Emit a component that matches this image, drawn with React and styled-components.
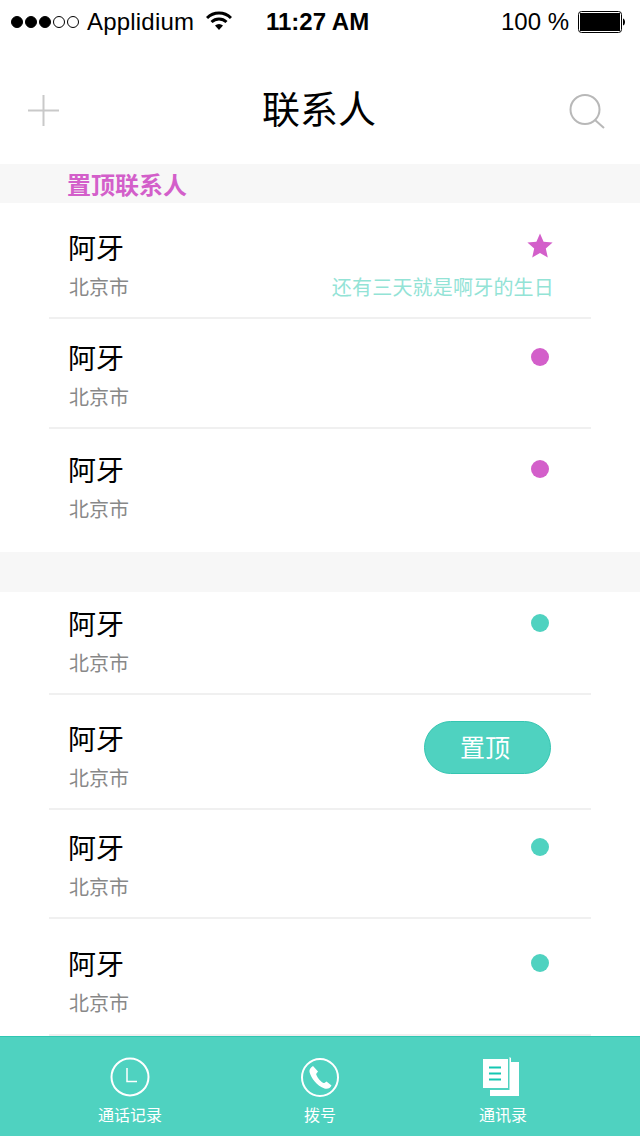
import React from "react";
import styled, { createGlobalStyle } from "styled-components";

const CJK = `"Noto Sans CJK SC", "Liberation Sans", sans-serif`;
const Global = createGlobalStyle`
  html, body { margin: 0; padding: 0; background: #fff; }
  * { box-sizing: border-box; }
`;
const Page = styled.div`
  width: 640px; height: 1136px; display: flex; flex-direction: column;
  background: #fff; overflow: hidden; font-family: ${CJK};
`;
const StatusBar = styled.div`
  height: 44px; flex: none; display: flex; align-items: center;
  font-family: "Liberation Sans", sans-serif; font-size: 24px; color: #000;
`;
const Signal = styled.div`display: flex; gap: 2px; margin-left: 11px; width: 76px;`;
const Dot = styled.span`
  width: 12px; height: 12px; border-radius: 50%;
  border: 1px solid #000; background: ${p => (p.$on ? "#000" : "#fff")};
`;
const Carrier = styled.span`width: 120px; white-space: nowrap; letter-spacing: 0.2px;`;
const Time = styled.span`font-weight: 700; margin-left: 33px; width: 235px; white-space: nowrap;`;
const Percent = styled.span`width: 78px; white-space: nowrap;`;
const Nav = styled.div`
  height: 120px; flex: none; display: flex; align-items: center; justify-content: space-between;
  padding: 12px 35px 0 28px;
`;
const Title = styled.h1`
  margin: 0 0 6px; font-size: 38px; font-weight: 400; color: #000; line-height: 50px;
  padding-left: 10px;
`;
const Band = styled.div`
  height: ${p => p.$h}px; flex: none; background: #f7f7f7; padding-left: 67px;
  font-size: 24px; line-height: 40px; font-weight: 700; color: #d35fca;
`;
const List = styled.div`flex: none; padding: 0 49px;`;
const Row = styled.div`
  height: ${p => p.$h}px; padding: ${p => p.$top}px 38px 0 20px; display: flex;
  justify-content: space-between; align-items: flex-start;
  border-bottom: ${p => (p.$last ? "none" : "2px solid #f0f0f0")};
`;
const Info = styled.div`display: flex; flex-direction: column;`;
const Name = styled.div`font-size: 28px; line-height: 40px; color: #000; margin-left: -1px;`;
const City = styled.div`font-size: 20px; line-height: 40px; color: #888;`;
const Trailing = styled.div`display: flex; flex-direction: column; align-items: flex-end;`;
const MarkerSlot = styled.div`height: 40px; display: flex; align-items: center;`;
const Marker = styled.span`
  width: 18px; height: 18px; border-radius: 50%; margin: 0 4px 0 0;
  background: ${p => p.$color};
`;
const Note = styled.div`
  font-size: 20px; line-height: 40px; color: #93e3d6; letter-spacing: 0.2px; white-space: nowrap;
  margin-right: -1px;
`;
const PinButton = styled.button`
  width: 127px; height: 53px; margin: 3px 2px 0 0; border-radius: 27px;
  border: 1px solid #35c5b1; background: #4fd2c0; color: #fff;
  font-family: ${CJK}; font-size: 25px; line-height: 47px; padding: 0 5px 3px 0;
`;
const TabBar = styled.div`
  margin-top: auto; height: 100px; flex: none; background: #4fd2c0; border-top: 1px solid #2fc6b2;
  display: grid; grid-template-columns: 260px 120px 246px; padding-top: 20px;
`;
const Tab = styled.div`
  display: flex; flex-direction: column; align-items: center; color: #fff; font-size: 16px;
`;
const TabIcon = styled.div`height: 42px; display: flex; align-items: center;`;
const TabLabel = styled.div`line-height: 24px; margin-top: 3px;`;

const Wifi = () => (
  <svg width="26" height="20" viewBox="0 0 26 20" style={{ marginBottom: 2, marginLeft: -1, marginRight: 1 }}>
    <path d="M1 7 A17 17 0 0 1 25 7" fill="none" stroke="#000" strokeWidth="3" />
    <path d="M5.5 11 A11 11 0 0 1 20.5 11" fill="none" stroke="#000" strokeWidth="3" />
    <path d="M13 19 L9 14.5 A6 6 0 0 1 17 14.5 Z" fill="#000" />
  </svg>
);
const Battery = () => (
  <svg width="47" height="22" viewBox="0 0 47 22" style={{ marginLeft: -1 }}>
    <rect x="0.5" y="0.5" width="43" height="21" rx="3" fill="#fff" stroke="#000" />
    <rect x="2" y="2" width="40" height="18" fill="#000" />
    <path d="M45 7.5 C46.5 8 47 9.5 47 11 C47 12.5 46.5 14 45 14.5 Z" fill="#000" />
  </svg>
);
const Plus = () => (
  <svg width="31" height="31" viewBox="0 0 31 31">
    <path d="M15.5 0 V31 M0 15.5 H31" stroke="#c9c9c9" strokeWidth="2" fill="none" />
  </svg>
);
const Search = () => (
  <svg width="36" height="35" viewBox="0 0 36 35" style={{ marginTop: 2 }}>
    <ellipse cx="16" cy="15.5" rx="14.5" ry="14.5" fill="none" stroke="#b8b8b8" strokeWidth="2" />
    <path d="M26 26 L35 34" stroke="#b8b8b8" strokeWidth="2" fill="none" />
  </svg>
);
const Star = () => (
  <svg width="26" height="26" viewBox="0 0 26 26" style={{ marginTop: -2 }}>
    <path d="M13 0.5 L16.6 8.8 L25.6 9.6 L18.8 15.5 L20.8 24.5 L13 20 L5.2 24.5 L7.2 15.5 L0.4 9.6 L9.4 8.8 Z" fill="#d35fca" />
  </svg>
);
const Clock = () => (
  <svg width="40" height="42" viewBox="0 0 40 42">
    <ellipse cx="20" cy="20" rx="18.5" ry="18.5" fill="none" stroke="#fff" strokeWidth="2" />
    <path d="M17 11 V24.5 H27" fill="none" stroke="#fff" strokeWidth="1.5" />
  </svg>
);
const Phone = () => (
  <svg width="40" height="42" viewBox="0 0 40 42">
    <ellipse cx="20" cy="20.5" rx="18" ry="18.5" fill="none" stroke="#fff" strokeWidth="2" />
    <path d="M13 9 C10.5 10.5 9 12.5 9.5 15 C11 21 17 29 24.5 31.5 C27.5 32.5 30.5 31 31.5 28.5 L26.5 24.5 C25.5 25 24.5 26.3 23.5 26.1 C21 25 17.5 21 16.2 17.5 C16 16.3 17.5 15.5 18 14.5 Z" fill="#fff" />
  </svg>
);
const Docs = () => (
  <svg width="40" height="42" viewBox="0 0 40 42">
    <path d="M26.5 0 L28 1 V5 H36 V39 H7 V33 H26.5 Z" fill="#fff" />
    <rect x="0" y="2" width="25" height="29" fill="#fff" />
    <rect x="6" y="9.5" width="12" height="2" fill="#14c7b2" />
    <rect x="6" y="15.5" width="12" height="2" fill="#14c7b2" />
    <rect x="6" y="21.5" width="12" height="2" fill="#14c7b2" />
  </svg>
);

const PURPLE = "#d35fca";
const TEAL = "#4fd2c0";

function Contact({ h, top, last, marker, note, star, pin }) {
  return (
    <Row $h={h} $top={top} $last={last}>
      <Info>
        <Name>阿牙</Name>
        <City>北京市</City>
      </Info>
      {pin ? (
        <PinButton>置顶</PinButton>
      ) : (
        <Trailing>
          <MarkerSlot>{star ? <Star /> : <Marker $color={marker} />}</MarkerSlot>
          {note && <Note>{note}</Note>}
        </Trailing>
      )}
    </Row>
  );
}

export default function App() {
  return (
    <Page>
      <Global />
      <StatusBar>
        <Signal>
          {[1, 1, 1, 0, 0].map((on, i) => <Dot key={i} $on={!!on} />)}
        </Signal>
        <Carrier>Applidium</Carrier>
        <Wifi />
        <Time>11:27 AM</Time>
        <Percent>100 %</Percent>
        <Battery />
      </StatusBar>
      <Nav>
        <Plus />
        <Title>联系人</Title>
        <Search />
      </Nav>
      <Band $h={39}>置顶联系人</Band>
      <List>
        <Contact h={116} top={24} star note="还有三天就是啊牙的生日" />
        <Contact h={110} top={18} marker={PURPLE} />
        <Contact h={123} top={20} marker={PURPLE} last />
      </List>
      <Band $h={40} />
      <List>
        <Contact h={103} top={11} marker={TEAL} />
        <Contact h={115} top={23} pin />
        <Contact h={109} top={17} marker={TEAL} />
        <Contact h={117} top={24} marker={TEAL} />
      </List>
      <TabBar>
        <Tab><TabIcon><Clock /></TabIcon><TabLabel>通话记录</TabLabel></Tab>
        <Tab><TabIcon><Phone /></TabIcon><TabLabel>拨号</TabLabel></Tab>
        <Tab><TabIcon><Docs /></TabIcon><TabLabel>通讯录</TabLabel></Tab>
      </TabBar>
    </Page>
  );
}
